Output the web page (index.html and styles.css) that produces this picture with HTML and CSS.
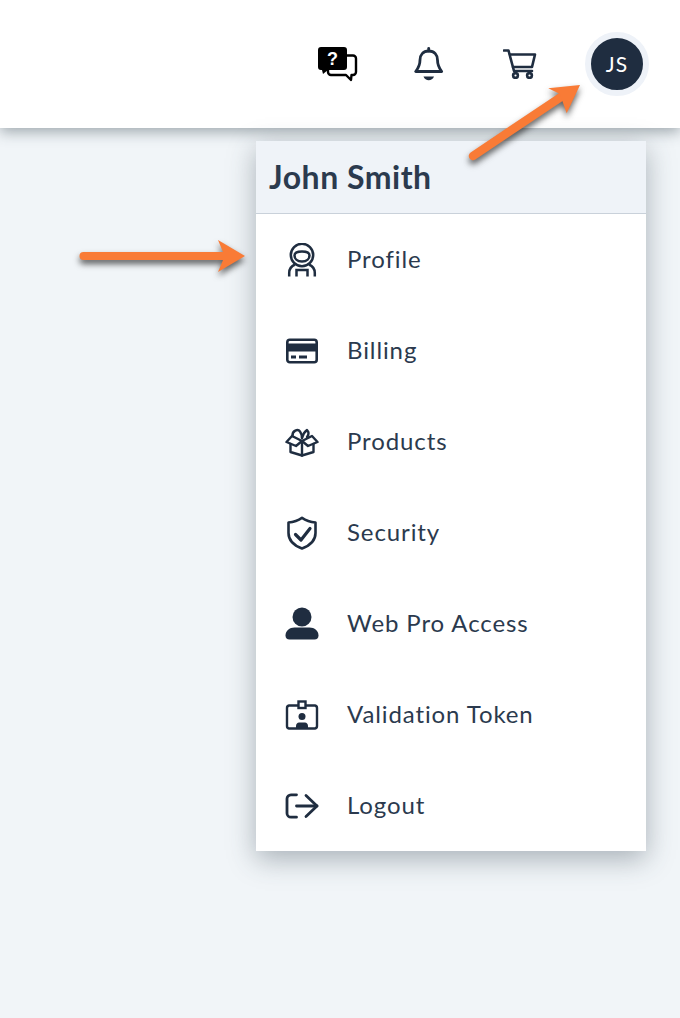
FILE: index.html
```html
<!DOCTYPE html>
<html lang="en">
<head>
  <meta charset="UTF-8" />
  <meta name="viewport" content="width=device-width, initial-scale=1.0"/>
  <title>Account Menu</title>
  <link rel="stylesheet" href="styles.css">
</head>
<body>

  <header class="topbar">
    <a class="topbar-icon icon-help" href="#">
      <svg width="40" height="36" viewBox="0 0 40 36">
        <path d="M3 1H26a3 3 0 0 1 3 3V21a3 3 0 0 1-3 3H10L5 28 4 24H3a3 3 0 0 1-3-3V4a3 3 0 0 1 3-3z" fill="#000"/>
        <path d="M29 9.500H35a3 3 0 0 1 3 3V26a3 3 0 0 1-3 3H33.500L33 34 28 29H13a3 3 0 0 1-3-3V24" fill="none" stroke="#000" stroke-width="2.400" stroke-linejoin="round"/>
        <text x="14.500" y="18.800" class="help-mark">?</text>
      </svg>
    </a>
    <a class="topbar-icon icon-bell" href="#">
      <svg width="30" height="34" viewBox="0 0 30 34" fill="none" stroke="#1f2d40" stroke-width="2.800" stroke-linejoin="round" stroke-linecap="round">
        <path d="M14.700 1.500V4"/>
        <path d="M14.700 4C9 4 6 8 6 13 6 18 4.500 21 1.700 24.500H27.700C25 21 23.500 18 23.500 13 23.500 8 20.500 4 14.700 4z"/>
        <path d="M9.500 29.500H20C19 32 17 33.200 14.700 33.200S10.500 32 9.500 29.500z" fill="#1f2d40" stroke="none"/>
      </svg>
    </a>
    <a class="topbar-icon icon-cart" href="#">
      <svg width="34" height="30" viewBox="0 0 34 30" fill="none" stroke="#1f2d40" stroke-width="2.600" stroke-linejoin="round" stroke-linecap="round">
        <path d="M1 1.500H5.500L11 22H29"/>
        <path d="M7 5.500H32L29 18H10"/>
        <circle cx="12.500" cy="26.500" r="2.400"/>
        <circle cx="26.500" cy="26.500" r="2.400"/>
      </svg>
    </a>
    <a class="avatar" href="#">JS</a>
  </header>

  <div class="user-menu">
    <div class="user-menu-head">John Smith</div>
    <ul class="user-menu-list">
      <li>
        <svg class="menu-icon" width="34" height="34" viewBox="0 0 34 34" fill="none" stroke="#1f2d40" stroke-width="2.500">
          <circle cx="17" cy="12" r="11.200"/>
          <path d="M9.500 12.500C9.500 9.500 12.500 8.500 17 8.500S24.500 9.500 24.500 12.500 22 18.500 17 18.500 9.500 15.500 9.500 12.500z"/>
          <path d="M4.200 33.500V30C4.200 25.500 6.500 23 10 21.500"/>
          <path d="M29.800 33.500V30C29.800 25.500 27.500 23 24 21.500"/>
          <path d="M11.500 33.500V27H22.500V33.500"/>
        </svg>
        <span>Profile</span>
      </li>
      <li>
        <svg class="menu-icon" width="34" height="34" viewBox="0 0 34 34">
          <rect x="2.300" y="5.800" width="29.400" height="22.400" rx="2.500" fill="none" stroke="#1f2d40" stroke-width="2.600"/>
          <rect x="2" y="9.500" width="30" height="8" fill="#1f2d40"/>
          <rect x="6" y="21.500" width="5" height="3" fill="#1f2d40"/>
          <rect x="14" y="21.500" width="8" height="3" fill="#1f2d40"/>
        </svg>
        <span>Billing</span>
      </li>
      <li>
        <svg class="menu-icon" width="34" height="34" viewBox="0 0 34 34" fill="none" stroke="#1f2d40" stroke-width="2.400" stroke-linejoin="round" stroke-linecap="round">
          <path d="M17 16L7 11 1.500 17 11 21z"/>
          <path d="M17 16L27 11 32.500 17 23 21z"/>
          <path d="M5.500 19V27L17 30.500 28.500 27V19"/>
          <path d="M17 16V30.500"/>
          <path d="M7.500 11C7 5.500 13 3.500 15 6.500 16.500 8.500 17 10.500 17 13"/>
          <path d="M17 13C18 8.500 20 6.500 22 5 24 7 24 9.500 22 12"/>
        </svg>
        <span>Products</span>
      </li>
      <li>
        <svg class="menu-icon" width="34" height="34" viewBox="0 0 34 34" fill="none" stroke="#1f2d40" stroke-width="2.600" stroke-linejoin="round" stroke-linecap="round">
          <path d="M17 1.800C21 4.500 26 6 30.500 6.500V17C30.500 24 25 29.500 17 32.500 9 29.500 3.500 24 3.500 17V6.500C8 6 13 4.500 17 1.800z"/>
          <path d="M10.500 18.500L16 24 25 12.500" stroke-width="3.200"/>
        </svg>
        <span>Security</span>
      </li>
      <li>
        <svg class="menu-icon" width="34" height="34" viewBox="0 0 34 34" fill="#1f2d40">
          <circle cx="17" cy="10" r="9.500"/>
          <path d="M0.500 28.500C0.500 24 4.500 20.500 9.500 20.500H24.500C29.500 20.500 33.500 24 33.500 28.500 33.500 31 32 32.500 29.500 32.500H4.500C2 32.500 0.500 31 0.500 28.500z"/>
        </svg>
        <span>Web Pro Access</span>
      </li>
      <li>
        <svg class="menu-icon" width="34" height="34" viewBox="0 0 34 34">
          <path d="M13.500 7.500H4A2.500 2.500 0 0 0 2 10V28A2.500 2.500 0 0 0 4 30.500H30A2.500 2.500 0 0 0 32 28V10A2.500 2.500 0 0 0 30 7.500H20.500" fill="none" stroke="#1f2d40" stroke-width="2.400"/>
          <rect x="13.500" y="3.500" width="7" height="6.500" fill="none" stroke="#1f2d40" stroke-width="2.400"/>
          <circle cx="17" cy="18.500" r="3.500" fill="#1f2d40"/>
          <path d="M11 31V28C11 26 12.500 24.500 14 24.500H20C21.500 24.500 23 26 23 28V31z" fill="#1f2d40"/>
        </svg>
        <span>Validation Token</span>
      </li>
      <li>
        <svg class="menu-icon" width="34" height="34" viewBox="0 0 34 34" fill="none" stroke="#1f2d40" stroke-width="2.800" stroke-linejoin="round" stroke-linecap="round">
          <path d="M11.500 5.800H6A4 4 0 0 0 2 9.800V24.200A4 4 0 0 0 6 28.200H11.500"/>
          <path d="M11.500 17H32"/>
          <path d="M21 6.500L32 17 21 27.500"/>
        </svg>
        <span>Logout</span>
      </li>
    </ul>
  </div>

  <svg class="arrow arrow-avatar" width="130" height="100" viewBox="0 0 130 100">
    <path d="M6 78L94 19" stroke="#f97b36" stroke-width="8.500" stroke-linecap="round"/>
    <path d="M113 7L81.300 10.300 93 16 95 22 99.700 35.300z" fill="#f97b36"/>
  </svg>
  <svg class="arrow arrow-profile" width="180" height="50" viewBox="0 0 180 50">
    <path d="M7.500 20H150" stroke="#f97b36" stroke-width="8" stroke-linecap="round"/>
    <path d="M169 20L142 4 147 16V24L142 36z" fill="#f97b36"/>
  </svg>

</body>
</html>
```

FILE: styles.css
```css
body {
  margin: 0;
  min-height: 1018px;
  background: #f1f5f8;
  font-family: 'Lato', sans-serif;
  color: #2b3a4e;
  overflow: hidden;
}

a {
  color: inherit;
  text-decoration: none;
}

.topbar {
  height: 128px;
  box-sizing: border-box;
  padding: 0 31px 1px 0;
  background: #fff;
  display: flex;
  justify-content: flex-end;
  align-items: center;
  box-shadow: 0 4px 13px rgba(60, 75, 85, 0.45);
}

.topbar-icon {
  display: flex;
}

.icon-help {
  margin-right: 56px;
}

.icon-bell {
  margin-right: 59px;
}

.icon-cart {
  margin-right: 48px;
}

.help-mark {
  font-family: 'Liberation Sans', sans-serif;
  font-weight: 700;
  font-size: 18px;
  text-anchor: middle;
  fill: #fff;
}

.avatar {
  width: 52px;
  height: 52px;
  border-radius: 50%;
  background: #1f2d40;
  border: 6.5px solid #eef2f8;
  color: #fff;
  font-size: 21px;
  letter-spacing: 1px;
  display: flex;
  justify-content: center;
  align-items: center;
}

.user-menu {
  position: absolute;
  top: 141px;
  left: 256px;
  width: 390px;
  background: #fff;
  box-shadow: 0 8px 26px rgba(50, 65, 80, 0.38);
}

.user-menu-head {
  height: 73px;
  box-sizing: border-box;
  padding: 0 13px 2px;
  display: flex;
  align-items: center;
  background: #eff3f8;
  border-bottom: 1px solid #c9d1da;
  font-size: 32px;
  letter-spacing: 0.5px;
  font-weight: 700;
  color: #2b3a4e;
}

.user-menu-list {
  list-style-type: none;
  margin: 0;
  padding: 0;
}

.user-menu-list li {
  height: 91px;
  padding-left: 29px;
  display: flex;
  align-items: center;
  font-size: 24px;
  letter-spacing: 0.9px;
}

.user-menu-list span {
  padding-bottom: 2px;
}

.menu-icon {
  margin-right: 28px;
}

.arrow {
  position: absolute;
  overflow: visible;
  filter: drop-shadow(0 4px 3px rgba(30, 30, 30, 0.7));
}

.arrow-avatar {
  top: 78px;
  left: 467px;
}

.arrow-profile {
  top: 236px;
  left: 76px;
}
```
